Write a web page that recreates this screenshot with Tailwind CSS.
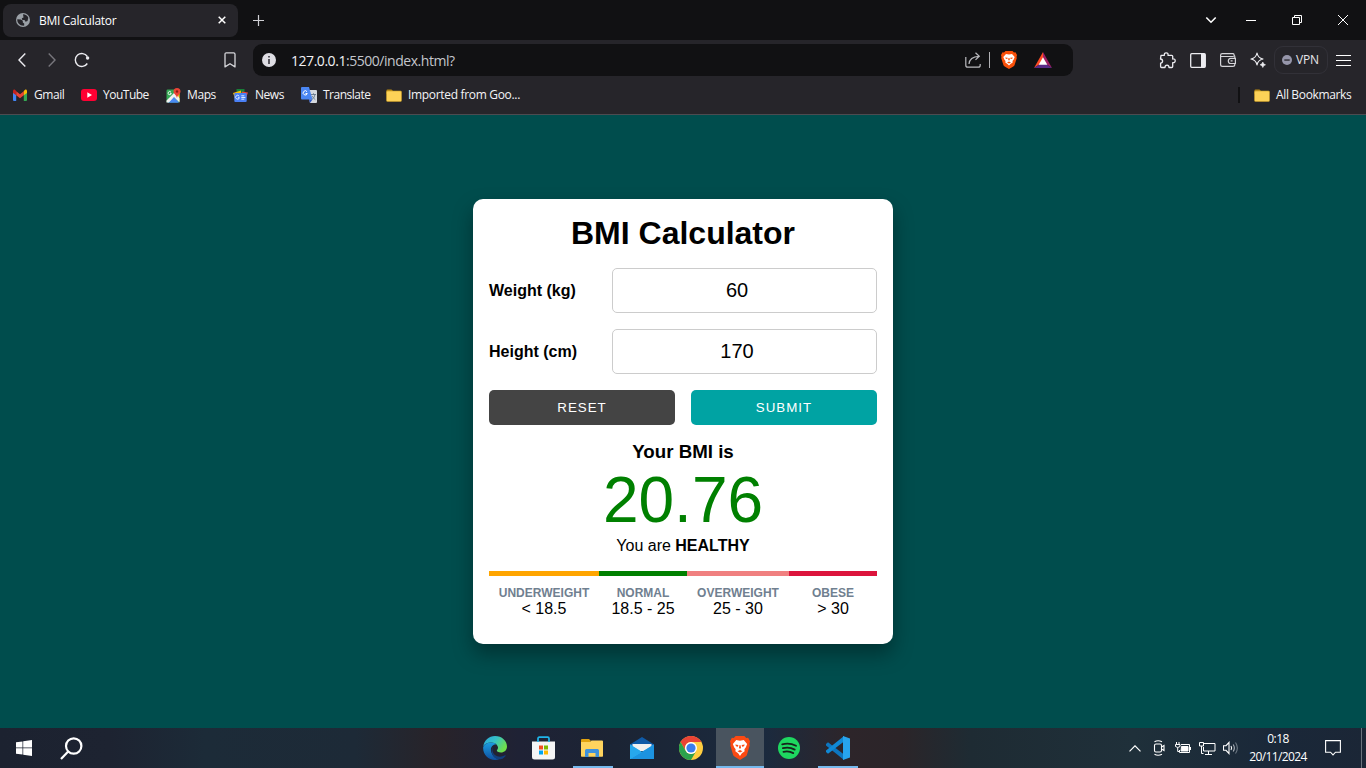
<!DOCTYPE html>
<html lang="en">
<head>
<meta charset="utf-8">
<title>BMI Calculator</title>
<script src="https://cdn.jsdelivr.net/npm/@tailwindcss/browser@4"></script>
</head>
<body class="w-[1366px] h-[768px] overflow-hidden flex flex-col bg-[#004d4d] font-['Open_Sans','Noto_Sans',sans-serif] text-[12px] text-white">

<!-- Tab strip -->
<header class="h-10 shrink-0 bg-[#111113] flex items-center">
  <div class="ml-[3px] w-[235px] h-[33px] rounded-[8px] bg-[#26252a] flex items-center pl-[13px]">
    <svg class="size-[14px] shrink-0" viewBox="0 0 14 14"><circle cx="7" cy="7" r="7" fill="#9aa0a6"/><path d="M1.300 6.200l3.500.3 2 1.200v1.700l1.400 1v2.200C4 13 1 10 1.300 6.200zM7 1.200c2.500 0 4.500 1.500 5.300 3.500L11.500 8 9.500 8.700 8.500 7H6.300L5.800 5.200l1.700-.7z" fill="#26252a"/></svg>
    <span class="ml-[9px] w-[174px] whitespace-nowrap tracking-[-0.3px] pt-px">BMI Calculator</span>
    <svg class="size-[8px] shrink-0 ml-[5px]" viewBox="0 0 8 8" stroke="#fff" stroke-width="1.500"><path d="M.7.7l6.600 6.600M7.300.7L.7 7.300"/></svg>
  </div>
  <svg class="size-[11px] ml-[15px]" viewBox="0 0 11 11" stroke="#d0d0d4" stroke-width="1.200"><path d="M5.500 0v11M0 5.500h11"/></svg>
  <div class="ml-auto flex items-center mr-[18px]">
    <svg class="w-[12px] h-[8px]" viewBox="0 0 12 8" fill="none" stroke="#fff" stroke-width="1.600"><path d="M1.300 1.500L6 6.200l4.700-4.700"/></svg>
    <svg class="w-[10px] h-[10px] ml-[29px]" viewBox="0 0 10 10" stroke="#fff"><path d="M0 5.500h10"/></svg>
    <svg class="w-[10px] h-[10px] ml-[36px]" viewBox="0 0 10 10" fill="none" stroke="#fff"><path d="M.5 2.500h7v7h-7zM2.500 2.500v-2h7v7h-2"/></svg>
    <svg class="w-[10px] h-[10px] ml-[36px]" viewBox="0 0 10 10" stroke="#fff"><path d="M0 0l10 10M10 0L0 10"/></svg>
  </div>
</header>

<!-- Toolbar -->
<nav class="h-10 shrink-0 bg-[#26252a] flex items-center">
  <svg class="w-[8px] h-[14px] ml-[18px]" viewBox="0 0 8 14" fill="none" stroke="#ececf0" stroke-width="1.400"><path d="M7.300.6L1 7l6.300 6.400"/></svg>
  <svg class="w-[8px] h-[14px] ml-[22px]" viewBox="0 0 8 14" fill="none" stroke="#77767c" stroke-width="1.400"><path d="M.7.6L7 7 .7 13.400"/></svg>
  <svg class="w-[16px] h-[16px] ml-[18px]" viewBox="0 0 16 16" fill="none" stroke="#ececf0" stroke-width="1.400"><path d="M13.300 11.500A6.500 6.500 0 1 1 13.300 4.500"/><circle cx="13.600" cy="6" r="1.700" fill="#ececf0" stroke="none"/></svg>
  <svg class="w-[12px] h-[16px] ml-[134px]" viewBox="0 0 12 16" fill="none" stroke="#d6d6da" stroke-width="1.300"><path d="M1 2.200Q1 .8 2.400.8h7.200Q11 .8 11 2.200V14.900L6 11.700 1 14.900z" stroke-linejoin="round"/></svg>
  <div class="ml-[17px] w-[820px] h-8 rounded-[9px] bg-[#111113] flex items-center">
    <svg class="size-[14px] ml-[9px]" viewBox="0 0 14 14"><circle cx="7" cy="7" r="7" fill="#dedde3"/><path d="M6.200 6h1.600v5H6.200zM6.200 3h1.600v1.600H6.200z" fill="#33323a"/></svg>
    <span class="ml-[15px] w-[674px] text-[14px] tracking-[-0.46px] whitespace-nowrap text-[#c4c6cc]"><span class="text-[#f2f2f5]">127.0.0.1</span>:5500/index.html?</span>
    <svg class="w-[16px] h-[16px]" viewBox="0 0 16 16" fill="none" stroke="#b9b9bd" stroke-width="1.200"><path d="M.8 5v8.200Q.8 15.200 2.800 15.200h10.400Q15.200 15.200 15.200 13.200V12"/><path d="M4 12c.3-4.800 3.200-7.400 10-7.700M10.500.800L14.300 4.300 10.500 7.900"/></svg>
    <div class="ml-[8px] w-px h-4 bg-[#b0b0b4]"></div>
    <svg class="w-[16px] h-[18px] ml-[11px]" viewBox="0 0 16 18"><path d="M4.500 0h7l1.500 1.500 1.500-.2L16 4l-.5 2 .3 1-2.300 7.300Q13 15.500 8 18 3 15.500 2.500 14.300L.2 7l.3-1L0 4l1.500-2.700 1.500.2z" fill="#f9500a"/><path d="M5 3l3 .5L11 3l2.700 3-1 2.500-1.200 1.500.2 1.500L9.500 13 8 14.500 6.500 13l-2.200-1.500.2-1.500-1.200-1.500-1-2.500z" fill="#fff"/><path d="M4.200 6.400l2.500.4-.4 1.200-1.500-.3zM11.800 6.400l-2.500.4.4 1.200 1.500-.3zM7.500 7h1l.3 2L8 9.600 7.200 9zM6 11.500l2-1 2 1-2 .9z" fill="#f9500a"/></svg>
    <svg class="w-[18px] h-[16px] ml-[17px]" viewBox="0 0 18 16"><path d="M9 0L0 16 9 10z" fill="#ff4b24"/><path d="M9 0l9 16-9-6z" fill="#9e1f63"/><path d="M0 16h18l-9-6z" fill="#582a86"/><path d="M9 5.200l4.300 7.600H4.700z" fill="#fff"/></svg>
  </div>
  <div class="ml-auto mr-[14px] flex items-center">
    <svg class="size-[17px]" viewBox="0 0 17 17" fill="none" stroke="#ececf0" stroke-width="1.300" stroke-linejoin="round"><path d="M2 3.300H5.400Q5 .8 7.200.8T9 3.300h3.700q1 0 1 1V7q2.500-.3 2.500 1.800t-2.500 1.900v3.800q0 1-1 1H10q0-2.300-2-2.300t-2 2.300H2.600q-1 0-1-1v-3.400Q3.600 11 3.600 9.100T1.500 7z"/></svg>
    <svg class="w-[16px] h-[15px] ml-[14px]" viewBox="0 0 16 15" fill="none" stroke="#ececf0" stroke-width="1.300"><rect x=".7" y=".7" width="14.600" height="13.600" rx="1"/><path d="M11 1h4v13h-4z" fill="#ececf0" stroke="none"/></svg>
    <svg class="w-[16px] h-[14px] ml-[14px]" viewBox="0 0 16 14" fill="none" stroke="#d4d4d8" stroke-width="1.200"><path d="M14.800 5V3.500q0-.8-.8-.8M14 2.700V1.500q0-.9-.9-.9H2.300Q.6.600.6 2.300v9.200q0 1.900 1.900 1.900h10.300q2 0 2-1.900V11M.8 3.500h13M15.400 5.300h-4.700q-2.400.2-2.400 2.600t2.400 2.600h4.700zM10.600 7.900h2"/></svg>
    <svg class="size-[16px] ml-[14px]" viewBox="0 0 16 16" fill="none" stroke="#ececf0" stroke-width="1.200" stroke-linejoin="round"><path d="M7 1q.9 5 6 6-5.100 1-6 6-.9-5-6-6 5.100-1 6-6z"/><path d="M12.800 10q.4 2.300 2.700 2.800-2.300.4-2.700 2.700-.4-2.300-2.700-2.700 2.300-.5 2.700-2.800z" fill="#ececf0" stroke-width=".6"/></svg>
    <div class="ml-[8px] w-[54px] h-[28px] rounded-[9px] border border-[#323138] flex items-center">
      <svg class="size-[10px] ml-[7px] shrink-0" viewBox="0 0 10 10"><circle cx="5" cy="5" r="5" fill="#9696aa"/><path d="M2.300 4.400h5.400v1.300H2.300z" fill="#26252a"/></svg>
      <span class="ml-[4px] text-[12px] tracking-[-0.2px] text-[#e6e6ea]">VPN</span>
    </div>
    <svg class="w-[15px] h-[13px] ml-[8px] mr-px" viewBox="0 0 15 13" stroke="#fff"><path d="M0 1.500h15M0 6.500h15M0 11.500h15"/></svg>
  </div>
</nav>

<!-- Bookmarks bar -->
<div class="h-[35px] shrink-0 bg-[#26252a] border-b border-[#4c4b50] flex items-center whitespace-nowrap pb-[4px] text-[#f4f4f6]">
  <svg class="w-[14px] h-[12px] ml-[13px]" viewBox="0 0 14 12"><path d="M0 2l3.200 2.300V12H1q-1 0-1-1z" fill="#4285f4"/><path d="M14 2l-3.200 2.300V12H13q1 0 1-1z" fill="#34a853"/><path d="M3.200 2.300L7 5.200l3.800-2.900v4L7 9.200 3.200 6.300z" fill="#ea4335"/><path d="M0 2Q.2.300 1.700.600l1.500 1.500v4.200L0 4z" fill="#c5221f"/><path d="M14 2q-.2-1.700-1.700-1.400l-1.500 1.500v4.200L14 4z" fill="#fbbc04"/></svg>
  <span class="ml-[7px] w-[33px] tracking-[-0.45px]">Gmail</span>
  <svg class="w-[16px] h-[12px] ml-[14px]" viewBox="0 0 16 12"><rect width="16" height="12" rx="3" fill="#ff0033"/><path d="M6.300 3.300L11 6 6.300 8.700z" fill="#fff"/></svg>
  <span class="ml-[6px] w-[47px] tracking-[-0.5px]">YouTube</span>
  <svg class="w-[15px] h-[15px] ml-[16px]" viewBox="0 0 15 15"><rect x=".5" y="1.500" width="13" height="13" rx="1.200" fill="#34a853"/><path d="M8 7l5.500-3v9.500L8 8z" fill="#fbbc04"/><path d="M1.500 14.500L7.500 8l5.500 6.500z" fill="#4a89f3"/><path d="M.5 12.500L9 4l2 2 2.500 4.500v4L8 9l-5 5.500H.5z" fill="#f1f1f1"/><path d="M3.500 14.500L8 9.800l4.300 4.700z" fill="#4a89f3"/><path d="M5 4.200a1.600 1.600 0 1 0 .3 1.200H4" fill="none" stroke="#fff" stroke-width=".9"/><path d="M11 0a3.500 3.500 0 0 1 3.500 3.500C14.500 6 11.500 7 11 10 10.500 7 7.500 6 7.500 3.500A3.500 3.500 0 0 1 11 0z" fill="#ea4335"/><circle cx="11" cy="3.500" r="1.200" fill="#8c1c13"/></svg>
  <span class="ml-[6px] w-[30px] tracking-[-0.4px]">Maps</span>
  <svg class="w-[15px] h-[13px] ml-[16px]" viewBox="0 0 15 13"><path d="M3.500 0h8v5h-8z" fill="#188038"/><path d="M0 4L8 1.500v6l-6 2z" fill="#fbbc04"/><path d="M15 3.500L9 2.500 8 8l5 1z" fill="#ea4335"/><rect x="1.300" y="4" width="12.400" height="9" rx="1" fill="#4a80f5"/><path d="M6.200 7.300A1.900 1.900 0 1 0 6.400 8.700H5M8.300 6.800h3M8.300 8.500h4M8.300 10.200h3" fill="none" stroke="#dce7ff"/></svg>
  <span class="ml-[7px] w-[31px] tracking-[-0.45px]">News</span>
  <svg class="w-[16px] h-[16px] ml-[15px]" viewBox="0 0 16 16"><path d="M6 3h9q1 0 1 1v11q0 1-1 1H9z" fill="#d5d9df"/><path d="M1 0h7l3.500 12.500H1q-1 0-1-1V1q0-1 1-1z" fill="#4a86f3"/><path d="M8 12.500h3.500L9 16z" fill="#2a56c6"/><path d="M6 4.700A2.100 2.100 0 1 0 6.300 6.500H4.500" fill="none" stroke="#fff"/><path d="M10 7.500h5M12.500 6.300v1.200M14 7.500q-.5 3.200-3 5M11.300 9.200q1 2 3 3.500" fill="none" stroke="#66788a" stroke-width=".9"/></svg>
  <span class="ml-[6px] w-[47px] tracking-[-0.5px]">Translate</span>
  <svg class="w-[16px] h-[13px] ml-[16px]" viewBox="0 0 16 13"><path d="M.5 1.500q0-1 1-1h4l1.500 1.500V5H.5z" fill="#b88915"/><rect x=".5" y="2" width="15" height="10.500" rx="1" fill="#fdd257" stroke="#c69a27" stroke-width=".6"/></svg>
  <span class="ml-[6px] tracking-[-0.32px]">Imported from Goo...</span>
  <div class="ml-auto w-[2px] h-4 bg-[#111113]"></div>
  <svg class="w-[16px] h-[13px] ml-[14px]" viewBox="0 0 16 13"><path d="M.5 1.500q0-1 1-1h4l1.500 1.500V5H.5z" fill="#b88915"/><rect x=".5" y="2" width="15" height="10.500" rx="1" fill="#fdd257" stroke="#c69a27" stroke-width=".6"/></svg>
  <span class="ml-[6px] w-[90px] tracking-[-0.35px]">All Bookmarks</span>
</div>

<!-- Page -->
<main class="grow flex items-center justify-center font-['Liberation_Sans',Arial,sans-serif] text-black text-[16px]">
  <section class="w-[420px] h-[445px] bg-white rounded-[10px] px-4 shadow-[0_10px_20px_rgba(0,0,0,0.35)] flex flex-col">
    <h1 class="mt-[16px] h-[37px] leading-[37px] text-[32px] font-bold text-center">BMI Calculator</h1>
    <div class="mt-4 flex items-center justify-between">
      <label class="font-bold">Weight (kg)</label>
      <div class="w-[265px] h-[45px] border border-[#ccc] rounded-[5px] pr-[15px] pb-[2px] text-[20px] flex items-center justify-center">60</div>
    </div>
    <div class="mt-4 flex items-center justify-between">
      <label class="font-bold">Height (cm)</label>
      <div class="w-[265px] h-[45px] border border-[#ccc] rounded-[5px] pr-[15px] pb-[2px] text-[20px] flex items-center justify-center">170</div>
    </div>
    <div class="mt-4 flex gap-4 text-[13.333px] text-white tracking-[1px]">
      <button class="flex-1 h-[35px] rounded-[5px] bg-[#444]">RESET</button>
      <button class="flex-1 h-[35px] rounded-[5px] bg-[#00a3a3]">SUBMIT</button>
    </div>
    <h3 class="mt-4 text-[18.72px] leading-[21px] font-bold text-center">Your BMI is</h3>
    <div class="mt-px h-[74px] leading-[74px] text-[64px] text-center text-[#008000]">20.76</div>
    <p class="leading-[18px] text-center">You are <b>HEALTHY</b></p>
    <div class="mt-[16px] flex text-center">
      <div class="w-[110px] border-t-[5px] border-[orange] pt-[10px]"><h4 class="text-[12px] leading-[14px] font-bold text-[#708090]">UNDERWEIGHT</h4><p class="leading-[18px]">&lt; 18.5</p></div>
      <div class="w-[88px] border-t-[5px] border-[green] pt-[10px]"><h4 class="text-[12px] leading-[14px] font-bold text-[#708090]">NORMAL</h4><p class="leading-[18px]">18.5 - 25</p></div>
      <div class="w-[102px] border-t-[5px] border-[#f08080] pt-[10px]"><h4 class="text-[12px] leading-[14px] font-bold text-[#708090]">OVERWEIGHT</h4><p class="leading-[18px]">25 - 30</p></div>
      <div class="w-[88px] border-t-[5px] border-[#dc143c] pt-[10px]"><h4 class="text-[12px] leading-[14px] font-bold text-[#708090]">OBESE</h4><p class="leading-[18px]">&gt; 30</p></div>
    </div>
  </section>
</main>

<!-- Taskbar -->
<footer class="h-10 shrink-0 bg-[linear-gradient(90deg,#1c2230_0%,#1d2331_8%,#1c2b38_15%,#1d2a37_26%,#282329_32%,#1f2235_38%,#1b2434_45%,#1b2a3e_56%,#2d252a_62%,#2b2529_66%,#1e2b33_71%,#1f303a_83%,#1a2839_93%,#1b2636_100%)] flex items-stretch">
  <div class="w-12 flex items-center justify-center">
    <svg class="size-[16px]" viewBox="0 0 16 16" fill="#fff"><path d="M0 2.300L6.500 1.400v6.200H0zM7.200 1.300L16 0v7.600H7.200zM0 8.300h6.500v6.300L0 13.700zM7.200 8.300H16V16l-8.800-1.300z"/></svg>
  </div>
  <div class="w-12 flex items-center justify-center pr-px">
    <svg class="size-[23px]" viewBox="0 0 23 23" fill="none" stroke="#fff" stroke-width="2.200"><circle cx="13.700" cy="9" r="7.700"/><path d="M8.200 14.500L1 22"/></svg>
  </div>
  <div class="ml-[375px] flex">
    <div class="w-[49px] flex items-center justify-center pr-[2px]">
      <svg class="size-[24px]" viewBox="0 0 24 24"><defs><linearGradient id="eg" x1="0" y1="0" x2="1" y2=".5"><stop offset="0" stop-color="#2aa5dc"/><stop offset=".5" stop-color="#35c1c8"/><stop offset="1" stop-color="#6fe04b"/></linearGradient><linearGradient id="eb" x1="0" y1="0" x2="0" y2="1"><stop offset="0" stop-color="#1b9de0"/><stop offset="1" stop-color="#0f4f9f"/></linearGradient></defs><path d="M.3 10.500C1 4.500 6 0 12 0c7 0 12 5 12 10.500 0 3.800-2.800 6-6 6-2.700 0-4.200-1-4.200-1.900 0-.7 1.200-1.200 1.200-2.900C15 9.500 12.500 6.500 8.500 6.500 4.500 6.500 1.500 8 .3 10.500z" fill="url(#eg)"/><path d="M.2 11C1.500 7.800 4.800 6.500 8.500 6.500c2 0 3.700.7 4.800 1.800C9 8.500 7.500 12 8 15c.7 4 4.500 8.300 8.500 7.900C15 23.700 13.500 24 12 24 5 24-.5 18 .2 11z" fill="url(#eb)"/><path d="M11 9.500C8.500 11.500 9 16.500 12 19c3 2.300 7 2 10 .3.600-.3.900.2.600.6C20.500 22.700 18 23.500 15.500 23.300 9.500 22.500 6 14 11 9.500z" fill="#123e7c"/></svg>
    </div>
    <div class="w-[49px] flex items-center justify-center pr-[3px]">
      <svg class="w-[23px] h-[24px]" viewBox="0 0 23 24"><path d="M0 5.500h23V21q0 2.500-2.500 2.500h-18Q0 23.500 0 21z" fill="#f5f5f5"/><path d="M6 6V2.500Q6 1.200 7.300 1.200h8.400Q17 1.200 17 2.500V6" fill="none" stroke="#1fb5ea" stroke-width="1.700"/><path d="M7 9.500h4v4H7z" fill="#f25022"/><path d="M12 9.500h4v4h-4z" fill="#7fba00"/><path d="M7 14.500h4v4H7z" fill="#00a4ef"/><path d="M12 14.500h4v4h-4z" fill="#ffb900"/></svg>
    </div>
    <div class="w-[49px] flex items-center justify-center pr-[3px] relative">
      <svg class="w-[22px] h-[18px]" viewBox="0 0 22 18"><path d="M0 1q0-1 1-1h7l1.500 1.500V4H0z" fill="#e2a30f"/><path d="M0 3h9l1.500-1.500H21q1 0 1 1V17q0 .7-.7.7H.7Q0 17.700 0 17z" fill="#ffd45e"/><path d="M4 18v-6.500Q4 10 5.500 10h11Q18 10 18 11.500V18h-3.500v-4h-7v4z" fill="#3f92dc"/></svg>
      <div class="absolute bottom-0 left-[4px] w-[40px] h-[2px] bg-[#76b9ed]"></div>
    </div>
    <div class="w-[49px] flex items-center justify-center pr-[2px]">
      <svg class="w-[24px] h-[22px]" viewBox="0 0 24 22"><path d="M0 7.500L12 0l12 7.500V12H0z" fill="#0f5aa7"/><path d="M2.500 7h19v7h-19z" fill="#f0f0f0"/><path d="M0 7.500l12 7.500L24 7.500V22H0z" fill="#35b8f1"/><path d="M24 7.500L0 22h24z" fill="#1c93e0"/><path d="M0 7.500L12 15 0 22z" fill="#27a7ec"/></svg>
    </div>
    <div class="w-[49px] flex items-center justify-center pr-[2px]">
      <svg class="size-[24px]" viewBox="0 0 24 24"><circle cx="12" cy="12" r="12" fill="#ffcd40"/><path d="M1.600 6A12 12 0 0 1 22.400 6H12a6 6 0 0 0-5.200 9z" fill="#e94335"/><path d="M1.600 6A12 12 0 0 0 12 24l5.200-9A6 6 0 0 1 6.800 15z" fill="#2ba24c"/><circle cx="12" cy="12" r="6" fill="#fff"/><circle cx="12" cy="12" r="4.600" fill="#3b7ded"/></svg>
    </div>
    <div class="w-[48px] flex items-center justify-center bg-[#49545f] relative">
      <svg class="w-[20px] h-[24px]" viewBox="0 0 16 18" preserveAspectRatio="none"><path d="M4.500 0h7l1.500 1.500 1.500-.2L16 4l-.5 2 .3 1-2.300 7.300Q13 15.500 8 18 3 15.500 2.500 14.300L.2 7l.3-1L0 4l1.500-2.700 1.500.2z" fill="#fb4a13"/><path d="M5 3l3 .5L11 3l2.700 3-1 2.500-1.200 1.500.2 1.500L9.500 13 8 15 6.500 13l-2.200-1.500.2-1.500-1.200-1.500-1-2.500z" fill="#fff"/><path d="M4.200 6.400l2.500.4-.4 1.200-1.500-.3zM11.800 6.400l-2.500.4.4 1.200 1.500-.3zM7.500 7h1l.3 2L8 9.600 7.200 9zM6 11.500l2-1 2 1-2 .9z" fill="#fb4a13"/></svg>
      <div class="absolute bottom-0 left-0 w-full h-[2px] bg-[#76b9ed]"></div>
    </div>
    <div class="w-[49px] flex items-center justify-center">
      <svg class="size-[22px]" viewBox="0 0 22 22"><circle cx="11" cy="11" r="11" fill="#1ed760"/><path d="M4.200 7.300q7.300-2 13.800 1.500M4.900 11.200q6.300-1.700 11.800 1.400M5.500 14.800q5.300-1.200 9.800 1.300" fill="none" stroke="#16231c" stroke-width="1.800" stroke-linecap="round"/></svg>
    </div>
    <div class="w-[49px] flex items-center justify-center relative">
      <svg class="size-[24px]" viewBox="0 0 24 24"><path d="M0 8l2-1.800L18 18.500V24L0 9.500z" fill="#0d76c0"/><path d="M0 16l2 1.800L18 5.500V0L0 14.500z" fill="#1089d6"/><path d="M17 0l7 2.500v19L17 24z" fill="#27a4ee"/></svg>
      <div class="absolute bottom-0 left-[5px] w-[40px] h-[2px] bg-[#76b9ed]"></div>
    </div>
  </div>
  <div class="ml-auto flex items-center">
    <svg class="w-[12px] h-[7px]" viewBox="0 0 12 7" fill="none" stroke="#fff" stroke-width="1.200"><path d="M.5 6.300L6 .8l5.500 5.500"/></svg>
    <svg class="w-[12px] h-[16px] ml-[12px]" viewBox="0 0 12 16" fill="none" stroke="#fff" stroke-width="1.100"><rect x="1.500" y="4" width="7" height="8" rx="1.500"/><path d="M8.500 7l2.500-1.500v5L8.500 9M1.500 1.800Q5 -.3 9 1.800M1.500 14.200q3.500 2.100 7.500 0"/></svg>
    <svg class="w-[16px] h-[12px] ml-[10px]" viewBox="0 0 16 12" fill="none" stroke="#fff"><path d="M6 2.500h8.500v8H4.500V8M15.500 5v3"/><path d="M6.500 4.500h6.500v4.500H6z" fill="#fff"/><path d="M1.500 0v2M4 0v2M.5 2.500h4.500v2q-2.200 2-4.500 0zM2.700 5.500v4h2"/></svg>
    <svg class="w-[17px] h-[15px] ml-[8px]" viewBox="0 0 17 15" fill="none" stroke="#fff"><path d="M5 2.500h11v7.500H4.500V6M9.500 10v3M6 13.500h7M.5 1.500h4v3.500h-4zM2.500 5v7.500h2"/></svg>
    <svg class="w-[16px] h-[14px] ml-[7px]" viewBox="0 0 16 14" fill="none" stroke="#fff" stroke-width="1.100"><path d="M.5 4.700H3L6 1.500v11L3 9.300H.5z"/><path d="M8 5q1.300 2 0 4"/><path d="M10.200 3.500q2.300 3.500 0 7" stroke="#aeb4bb"/><path d="M12.500 1.500q3.700 5.500 0 11" stroke="#6f7a85"/></svg>
    <div class="w-[78px] flex flex-col items-center leading-[18px] pb-px whitespace-nowrap">
      <span class="tracking-[-0.6px]">0:18</span><span class="tracking-[-0.6px]">20/11/2024</span>
    </div>
    <svg class="w-[16px] h-[16px] ml-[8px]" viewBox="0 0 16 16" fill="none" stroke="#fff" stroke-width="1.100"><path d="M.6.600h14.800v11.600h-4.900L8 14.900 5.500 12.200H.6z"/></svg>
    <div class="ml-[20px] mr-[4px] w-px h-10 bg-[#6a737d]"></div>
  </div>
</footer>
</body>
</html>
